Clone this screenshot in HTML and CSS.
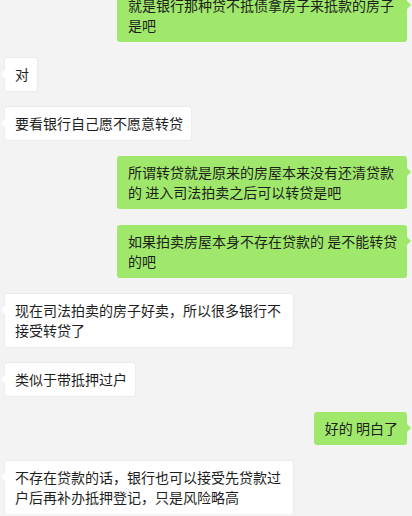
FILE: index.html
```html
<!DOCTYPE html>
<html>
<head>
    <title>聊天记录</title>
    <meta name="viewport" content="width=device-width, initial-scale=1.0">
    <link rel="stylesheet" href="styles.css">
</head>
<body>

<div class="chat">
    <div class="msg mine"><div class="bubble">就是银行那种贷不抵债拿房子来抵款的房子是吧</div></div>
    <div class="msg theirs"><div class="bubble">对</div></div>
    <div class="msg theirs"><div class="bubble">要看银行自己愿不愿意转贷</div></div>
    <div class="msg mine"><div class="bubble">所谓转贷就是原来的房屋本来没有还清贷款的 进入司法拍卖之后可以转贷是吧</div></div>
    <div class="msg mine"><div class="bubble">如果拍卖房屋本身不存在贷款的 是不能转贷的吧</div></div>
    <div class="msg theirs"><div class="bubble">现在司法拍卖的房子好卖，所以很多银行不接受转贷了</div></div>
    <div class="msg theirs"><div class="bubble">类似于带抵押过户</div></div>
    <div class="msg mine"><div class="bubble">好的 明白了</div></div>
    <div class="msg theirs"><div class="bubble">不存在贷款的话，银行也可以接受先贷款过户后再补办抵押登记，只是风险略高</div></div>
</div>

</body>
</html>
```

FILE: styles.css
```css
body {
    font-family: "Noto Sans CJK SC", "Noto Sans", sans-serif;
    background: #f3f3f4;
    margin: 0;
    overflow: hidden;
}
.chat {
    display: flex;
    flex-direction: column;
    gap: 16px;
    margin-top: -11px;
    padding: 0 5px;
}
.msg {
    display: flex;
}
.msg.theirs {
    justify-content: flex-start;
}
.msg.mine {
    justify-content: flex-end;
}
.bubble {
    position: relative;
    max-width: 270px;
    font-size: 14px;
    line-height: 20px;
    color: #1e1e1e;
    border-radius: 3px;
}
.theirs .bubble {
    background: #fff;
    padding: 6px 8px 7px 10px;
    box-shadow: 0 0 0 1px #ececec;
}
.mine .bubble {
    background: #9fe86b;
    padding: 6px 9px 7px 11px;
}
.bubble::before {
    content: "";
    position: absolute;
    top: 12px;
    border: 4px solid transparent;
}
.theirs .bubble::before {
    left: -8px;
    border-right-color: #fff;
}
.mine .bubble::before {
    right: -8px;
    border-left-color: #9fe86b;
}
```
